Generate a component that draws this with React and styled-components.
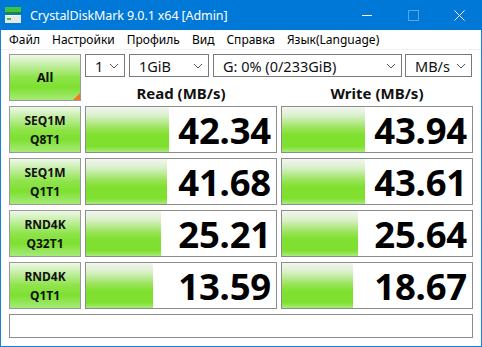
import React from "react";
import styled, { createGlobalStyle } from "styled-components";

const GlobalStyle = createGlobalStyle`
body{
  margin:0;
  background:#ffffff;
  font-family:"Noto Sans","Liberation Sans",sans-serif;
}
`;

const Window = styled.div`
width:482px;
height:347px;
box-sizing:border-box;
border:1px solid #1a7fd4;
border-top:none;
display:flex;
flex-direction:column;
background:#ffffff;
`;

const TitleBar = styled.div`
height:30px;
margin:0 -1px;
background:#0078d7;
display:flex;
align-items:center;
color:#ffffff;
font-size:12.5px;
`;

const AppIcon = styled.svg`
width:18px;
height:18px;
margin:0 8px 0 4px;
`;

const TitleText = styled.div`
flex:1;
letter-spacing:-0.1px;
`;

const Control = styled.div`
width:46px;
height:30px;
display:flex;
align-items:center;
justify-content:center;
`;

const MenuBar = styled.div`
height:19px;
display:flex;
align-items:center;
padding-left:2px;
border-bottom:1px solid #f0f0f0;
font-size:12px;
color:#000;
`;

const MenuItem = styled.div`
padding:0 6px;
`;

const Client = styled.div`
padding:4px 8px 0 8px;
display:grid;
grid-template-columns:72px 192px 192px;
grid-template-rows:repeat(5, 47px) 24px;
column-gap:4px;
row-gap:5px;
`;

const LabelButton = styled.div`
position:relative;
box-sizing:border-box;
border:1px solid #9a9a9a;
background:linear-gradient(#eef8e8 0%, #c4eea4 22%, #8ee44a 50%, #7ee030 72%, #a6ea7a 100%);
display:flex;
flex-direction:column;
align-items:center;
justify-content:center;
font-weight:700;
font-size:${p => (p.$big ? "13px" : "12px")};
line-height:19px;
color:#111;
`;

const Corner = styled.div`
position:absolute;
right:0;
bottom:0;
width:0;
height:0;
border-left:7px solid transparent;
border-bottom:7px solid #f07a1e;
`;

const TopArea = styled.div`
grid-column:2 / span 2;
display:flex;
flex-direction:column;
`;

const SelectRow = styled.div`
display:flex;
height:23px;
gap:4px;
`;

const Select = styled.div`
box-sizing:border-box;
width:${p => p.$w}px;
margin-left:${p => p.$ml || 0}px;
height:23px;
border:1px solid #7a7a7a;
background:#fff;
display:flex;
align-items:center;
padding:0 5px 0 9px;
font-size:14.5px;
color:#111;
`;

const SelectText = styled.span`
flex:1;
white-space:nowrap;
overflow:hidden;
`;

const Headers = styled.div`
flex:1;
display:grid;
grid-template-columns:192px 192px;
column-gap:4px;
align-items:center;
`;

const Header = styled.div`
text-align:center;
font-weight:700;
font-size:15px;
color:#111;
padding-top:6px;
`;

const ResultBox = styled.div`
position:relative;
box-sizing:border-box;
border:1px solid #8c8c8c;
background:#ffffff;
display:flex;
align-items:center;
justify-content:flex-end;
padding-right:5px;
`;

const Bar = styled.div`
position:absolute;
left:0;
top:0;
bottom:0;
background:linear-gradient(#f4f5f2 0%, #d8f0c8 20%, #98e356 48%, #80e030 62%, #80e030 88%, #a8ec7c 100%);
`;

const Value = styled.div`
position:relative;
font-weight:700;
font-size:36.5px;
letter-spacing:-0.2px;
color:#000;
line-height:44px;
padding-top:1px;
white-space:nowrap;
`;

const Status = styled.div`
grid-column:1 / span 3;
box-sizing:border-box;
border:1px solid #8c8c8c;
background:#fff;
`;

const Chevron = () => (
  <svg width="10" height="6" viewBox="0 0 10 6">
    <polyline points="1,1 5,5 9,1" fill="none" stroke="#555" strokeWidth="1" />
  </svg>
);

const rows = [
  { l1: "SEQ1M", l2: "Q8T1", r: "42.34", rw: 83, w: "43.94", ww: 83 },
  { l1: "SEQ1M", l2: "Q1T1", r: "41.68", rw: 81, w: "43.61", ww: 83 },
  { l1: "RND4K", l2: "Q32T1", r: "25.21", rw: 75, w: "25.64", ww: 76 },
  { l1: "RND4K", l2: "Q1T1", r: "13.59", rw: 67, w: "18.67", ww: 71 },
];

const App = () => {
  return (
    <Window>
      <GlobalStyle />
      <TitleBar>
        <AppIcon viewBox="0 0 18 18">
          <rect x="1" y="1" width="16" height="5" fill="#3cc43c" />
          <rect x="1" y="6" width="16" height="1.5" fill="#1c8a2c" />
          <rect x="1" y="9" width="16" height="8" fill="#e8e8e8" />
          <rect x="1" y="9" width="16" height="1" fill="#ffffff" />
          <rect x="3" y="12" width="4" height="2" fill="#3cc43c" />
        </AppIcon>
        <TitleText>CrystalDiskMark 9.0.1 x64 [Admin]</TitleText>
        <Control>
          <svg width="11" height="11" viewBox="0 0 11 11">
            <line x1="0" y1="5.5" x2="10" y2="5.5" stroke="#fff" strokeWidth="1" />
          </svg>
        </Control>
        <Control>
          <svg width="11" height="11" viewBox="0 0 11 11">
            <rect x="0.5" y="0.5" width="10" height="10" fill="none" stroke="#5aa6e6" strokeWidth="1" />
          </svg>
        </Control>
        <Control>
          <svg width="11" height="11" viewBox="0 0 11 11">
            <path d="M0.5 0.5 L10.5 10.5 M10.5 0.5 L0.5 10.5" stroke="#fff" strokeWidth="1" />
          </svg>
        </Control>
      </TitleBar>
      <MenuBar>
        <MenuItem>Файл</MenuItem>
        <MenuItem>Настройки</MenuItem>
        <MenuItem>Профиль</MenuItem>
        <MenuItem>Вид</MenuItem>
        <MenuItem>Справка</MenuItem>
        <MenuItem>Язык(Language)</MenuItem>
      </MenuBar>
      <Client>
        <LabelButton $big>
          All
          <Corner />
        </LabelButton>
        <TopArea>
          <SelectRow>
            <Select $w={40}><SelectText>1</SelectText><Chevron /></Select>
            <Select $w={80}><SelectText>1GiB</SelectText><Chevron /></Select>
            <Select $w={189}><SelectText>G: 0% (0/233GiB)</SelectText><Chevron /></Select>
            <Select $w={67} $ml={-1}><SelectText>MB/s</SelectText><Chevron /></Select>
          </SelectRow>
          <Headers>
            <Header>Read (MB/s)</Header>
            <Header>Write (MB/s)</Header>
          </Headers>
        </TopArea>
        {rows.map((row, i) => (
          <React.Fragment key={i}>
            <LabelButton>
              <span>{row.l1}</span>
              <span>{row.l2}</span>
            </LabelButton>
            <ResultBox>
              <Bar style={{ width: row.rw }} />
              <Value>{row.r}</Value>
            </ResultBox>
            <ResultBox>
              <Bar style={{ width: row.ww }} />
              <Value>{row.w}</Value>
            </ResultBox>
          </React.Fragment>
        ))}
        <Status />
      </Client>
    </Window>
  );
};

export default App;
